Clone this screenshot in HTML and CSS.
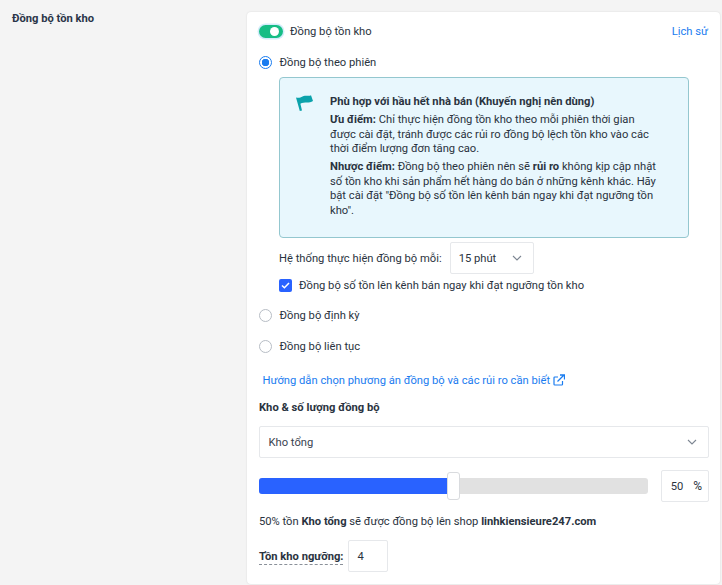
FILE: index.html
```html
<!DOCTYPE html>
<html lang="vi">
<head>
<meta charset="utf-8">
<title>Đồng bộ tồn kho</title>
<link rel="stylesheet" href="styles.css">
</head>
<body>
<div class="page">
  <div class="side-title">Đồng bộ tồn kho</div>
  <section class="card">
    <div class="head-row">
      <div class="toggle-wrap">
        <span class="toggle"><span class="knob"></span></span>
        <span>Đồng bộ tồn kho</span>
      </div>
      <a class="link history">Lịch sử</a>
    </div>

    <div class="radio-row first">
      <span class="radio checked"></span><span>Đồng bộ theo phiên</span>
    </div>

    <div class="session-body">
      <div class="info">
        <svg class="flag" width="20" height="18" viewBox="0 0 20 18"><path d="M1 2.500c2.500.8 4.500.2 6.500-1 2.200-.9 4.200-.6 6.200-.7 1-.1 1.600-.3 2.300-.6l2 5.800c-1.800 1.300-4 1.500-6 1.500-2.300 0-4.800 0-6.600 1.200L7 15.500l-2.200.6z" fill="#0ba2ab"/></svg>
        <div class="info-text">
          <p class="info-title">Phù hợp với hầu hết nhà bán (Khuyến nghị nên dùng)</p>
          <p><b>Ưu điểm:</b> Chỉ thực hiện đồng tồn kho theo mỗi phiên thời gian được cài đặt, tránh được các rủi ro đồng bộ lệch tồn kho vào các thời điểm lượng đơn tăng cao.</p>
          <p><b>Nhược điểm:</b> Đồng bộ theo phiên nên sẽ <b>rủi ro</b> không kịp cập nhật số tồn kho khi sản phẩm hết hàng do bán ở những kênh khác. Hãy bật cài đặt "Đồng bộ số tồn lên kênh bán ngay khi đạt ngưỡng tồn kho".</p>
        </div>
      </div>
      <div class="interval-row">
        <span>Hệ thống thực hiện đồng bộ mỗi:</span>
        <div class="select small">
          <span>15 phút</span>
          <svg width="10" height="6" viewBox="0 0 10 6"><path d="M1 1l4 4 4-4" fill="none" stroke="#7d8692" stroke-width="1.100"/></svg>
        </div>
      </div>
      <div class="check-row">
        <span class="check"><svg width="9" height="7" viewBox="0 0 9 7"><path d="M1 3.500l2.400 2.300L8 1" fill="none" stroke="#fff" stroke-width="1.500"/></svg></span>
        <span>Đồng bộ số tồn lên kênh bán ngay khi đạt ngưỡng tồn kho</span>
      </div>
    </div>

    <div class="radio-row second"><span class="radio"></span><span>Đồng bộ định kỳ</span></div>
    <div class="radio-row third"><span class="radio"></span><span>Đồng bộ liên tục</span></div>

    <div class="guide">
      <a class="link">Hướng dẫn chọn phương án đồng bộ và các rủi ro cần biết</a>
      <svg width="12" height="12" viewBox="0 0 12 12"><path d="M9.500 7v3.200a.8.8 0 0 1-.8.8H1.800a.8.8 0 0 1-.8-.8V3.800a.8.8 0 0 1 .8-.8H5" fill="none" stroke="#1a7cf0" stroke-width="1.200"/><path d="M4.500 7.500L10.500 1.500M7 1h4.500v4.500" fill="none" stroke="#1a7cf0" stroke-width="1.300"/></svg>
    </div>

    <h3 class="section-title">Kho &amp; số lượng đồng bộ</h3>

    <div class="select wide">
      <span>Kho tổng</span>
      <svg width="10" height="6" viewBox="0 0 10 6"><path d="M1 1l4 4 4-4" fill="none" stroke="#7d8692" stroke-width="1.100"/></svg>
    </div>

    <div class="slider-row">
      <div class="track">
        <div class="fill"></div>
        <span class="thumb"></span>
      </div>
      <div class="percent"><span>50</span><span class="percent-sign">%</span></div>
    </div>

    <p class="summary">50% tồn <b>Kho tổng</b> sẽ được đồng bộ lên shop <b>linhkiensieure247.com</b></p>

    <div class="threshold">
      <span class="threshold-label">Tồn kho ngưỡng:</span>
      <div class="threshold-input">4</div>
    </div>
  </section>
</div>
</body>
</html>
```

FILE: styles.css
```css
* { box-sizing: border-box; }
html, body { margin: 0; padding: 0; }
body {
  background: #f4f4f4;
  font-family: Roboto, "Noto Sans", sans-serif;
  font-size: 11.2px;
  color: #2a3340;
  height: 585px;
  overflow: hidden;
}
.page { display: flex; align-items: flex-start; padding-top: 12px; }
.side-title {
  width: 247px;
  padding-left: 12px;
  font-weight: 700;
  line-height: 13px;
  color: #2a3548;
}
.card {
  width: 473px;
  height: 572px;
  background: #fff;
  border-radius: 4px;
  box-shadow: 0 0 2px rgba(0,0,0,.12);
  padding: 0 11px 0 12px;
}
.link { color: #1a7cf0; }
.history { margin-right: 1px; }
.head-row {
  height: 38px;
  display: flex;
  align-items: center;
  justify-content: space-between;
}
.toggle-wrap { display: flex; align-items: center; gap: 7px; }
.toggle {
  width: 24px;
  height: 13px;
  border-radius: 7px;
  background: #16bd85;
  box-shadow: 0 0 0 1.500px #d3ecfa;
  display: flex;
  justify-content: flex-end;
  align-items: center;
  padding-right: 4px;
}
.knob { width: 9px; height: 9px; border-radius: 50%; background: #fff; }
.radio-row { display: flex; align-items: center; gap: 7.500px; height: 14px; }
.radio-row.first { margin-top: 5px; }
.radio-row.second { margin-top: 14px; }
.radio-row.third { margin-top: 17px; }
.radio {
  width: 13px;
  height: 13px;
  border-radius: 50%;
  border: 1px solid #b7bdc5;
  background: #fff;
  flex: none;
}
.radio.checked {
  border-color: #1a7cf0;
  background: radial-gradient(circle, #1a7cf0 0 3.500px, #fff 4px);
}
.session-body { padding-left: 20px; }
.info {
  margin-top: 8px;
  width: 410px;
  height: 161px;
  border: 1px solid #94c7cf;
  border-radius: 4px;
  background: #e8f7fd;
  display: flex;
  padding: 17px 0 0 15px;
}
.flag { flex: none; margin-right: 15px; }
.info-text { width: 328px; line-height: 14.600px; }
.info-text p { margin: 0 0 3.400px; }
.info-text b, .summary b { font-weight: 700; }
.info-title { font-weight: 700; }
.interval-row {
  margin-top: 4px;
  display: flex;
  align-items: center;
  gap: 8px;
}
.select {
  display: flex;
  align-items: center;
  justify-content: space-between;
  background: #fff;
  border: 1px solid #e6e8eb;
  border-radius: 2px;
}
.select.small { width: 84px; height: 32px; padding: 0 11px 0 8px; }
.check-row { margin-top: 3px; display: flex; align-items: center; gap: 7px; height: 17px; }
.check {
  width: 13px;
  height: 13px;
  background: #2962ff;
  border-radius: 2px;
  display: flex;
  align-items: center;
  justify-content: center;
  flex: none;
}
.guide {
  margin-top: 20px;
  padding-left: 3.500px;
  display: flex;
  align-items: center;
  gap: 3px;
  height: 14px;
}
.section-title {
  margin: 14px 0 0;
  font-size: 11.2px;
  font-weight: 700;
  line-height: 14px;
}
.select.wide { margin-top: 11px; height: 32px; padding: 0 11px 0 8.500px; color: #3a4350; }
.slider-row {
  margin-top: 12px;
  display: flex;
  align-items: center;
  justify-content: space-between;
}
.track {
  position: relative;
  width: 389px;
  height: 16px;
  border-radius: 3px;
  background: #e1e1e1;
  overflow: visible;
}
.fill { width: 188px; height: 100%; background: #2962ff; border-radius: 3px 0 0 3px; }
.thumb {
  position: absolute;
  left: 188px;
  top: -6px;
  width: 13px;
  height: 28px;
  background: #fff;
  border: 1px solid #d9dbde;
  border-radius: 3px;
}
.percent {
  width: 48px;
  height: 32px;
  border: 1px solid #e6e8eb;
  border-radius: 2px;
  display: flex;
  align-items: center;
  justify-content: flex-end;
  gap: 10px;
  padding-right: 6px;
}
.percent-sign { font-size: 12px; }
.summary { margin: 13px 0 0; line-height: 14px; }
.threshold { margin-top: 11px; display: flex; align-items: center; gap: 5px; }
.threshold-label {
  font-weight: 700;
  border-bottom: 1px dashed #8a9099;
  line-height: 14px;
  margin-top: 3px;
}
.threshold-input {
  width: 40px;
  height: 32px;
  border: 1px solid #e6e8eb;
  border-radius: 2px;
  display: flex;
  align-items: center;
  padding-left: 8px;
}
```
